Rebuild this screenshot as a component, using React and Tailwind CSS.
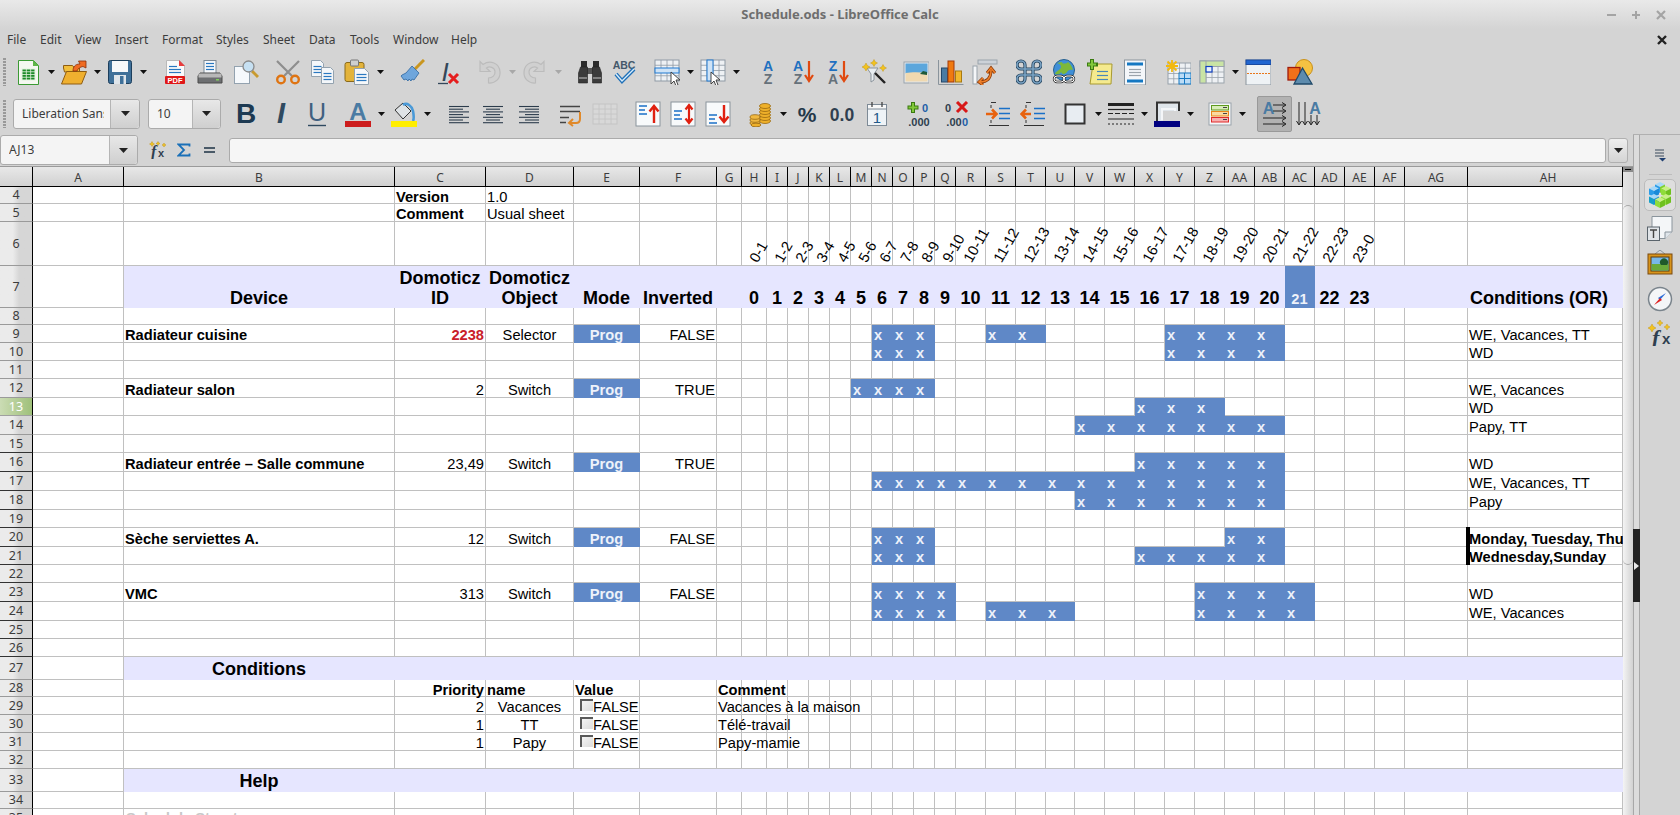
import React from "react";

const UI = "[font-family:'Noto_Sans',sans-serif]";

const COLS = ["A","B","C","D","E","F","G","H","I","J","K","L","M","N","O","P","Q","R","S","T","U","V","W","X","Y","Z","AA","AB","AC","AD","AE","AF","AG","AH"];
const ROWS = Array.from({ length: 32 }, (_, i) => i + 4);
const HOUR_START = COLS.indexOf("H");

// hours with a blue "x" cell, per sheet row
const SCHEDULE = {
  9: [6, 7, 8, 11, 12, 17, 18, 19, 20],
  10: [6, 7, 8, 17, 18, 19, 20],
  12: [5, 6, 7, 8],
  13: [16, 17, 18],
  14: [14, 15, 16, 17, 18, 19, 20],
  16: [16, 17, 18, 19, 20],
  17: [6, 7, 8, 9, 10, 11, 12, 13, 14, 15, 16, 17, 18, 19, 20],
  18: [14, 15, 16, 17, 18, 19, 20],
  20: [6, 7, 8, 19, 20],
  21: [6, 7, 8, 16, 17, 18, 19, 20],
  23: [6, 7, 8, 9, 18, 19, 20, 21],
  24: [6, 7, 8, 9, 11, 12, 13, 18, 19, 20, 21],
};

const l = (t) => ({ t });
const b = (t) => ({ t, bold: true });
const c = (t) => ({ t, align: "center" });
const r = (t) => ({ t, align: "right" });
const prog = { t: "Prog", prog: true };
const head = (t) => ({ t, head: true, align: "center" });

const CELLS = {
  4: { C: b("Version"), D: l("1.0") },
  5: { C: b("Comment"), D: l("Usual sheet") },
  7: { B: head("Device"), C: head("Domoticz ID"), D: head("Domoticz Object"), E: head("Mode"), F: head("Inverted"), AH: { t: "Conditions (OR)", head: true } },
  9: { B: b("Radiateur cuisine"), C: { t: "2238", bold: true, red: true, align: "right" }, D: c("Selector"), E: prog, F: r("FALSE"), AH: l("WE, Vacances, TT") },
  10: { AH: l("WD") },
  12: { B: b("Radiateur salon"), C: r("2"), D: c("Switch"), E: prog, F: r("TRUE"), AH: l("WE, Vacances") },
  13: { AH: l("WD") },
  14: { AH: l("Papy, TT") },
  16: { B: b("Radiateur entrée – Salle commune"), C: r("23,49"), D: c("Switch"), E: prog, F: r("TRUE"), AH: l("WD") },
  17: { AH: l("WE, Vacances, TT") },
  18: { AH: l("Papy") },
  20: { B: b("Sèche serviettes A."), C: r("12"), D: c("Switch"), E: prog, F: r("FALSE"), AH: { t: "Monday, Tuesday, Thursday", bold: true, bar: true } },
  21: { AH: { t: "Wednesday,Sunday", bold: true, bar: true } },
  23: { B: b("VMC"), C: r("313"), D: c("Switch"), E: prog, F: r("FALSE"), AH: l("WD") },
  24: { AH: l("WE, Vacances") },
  27: { B: { t: "Conditions", title: true } },
  28: { C: { t: "Priority", bold: true, align: "right" }, D: b("name"), E: b("Value"), G: b("Comment") },
  29: { C: r("2"), D: c("Vacances"), E: { t: "FALSE", check: true }, G: l("Vacances à la maison") },
  30: { C: r("1"), D: c("TT"), E: { t: "FALSE", check: true }, G: l("Télé-travail") },
  31: { C: r("1"), D: c("Papy"), E: { t: "FALSE", check: true }, G: l("Papy-mamie") },
  33: { B: { t: "Help", title: true } },
  35: { B: { t: "Schedule Structure", faint: true } },
};

function Icon({ className = "", children }) {
  return (
    <svg viewBox="0 0 26 26" className={`h-[26px] w-[26px] shrink-0 ${className}`}>
      {children}
    </svg>
  );
}

function Arrow({ className = "", muted }) {
  return (
    <svg viewBox="0 0 7 4" className={`h-[4px] w-[7px] shrink-0 ${className}`}>
      <path d="M0 0h7L3.5 4z" fill={muted ? "#a8a8a8" : "#111"} />
    </svg>
  );
}

function Grip() {
  return <div className="ml-[3px] h-[28px] w-[3px] shrink-0 bg-[repeating-linear-gradient(to_bottom,#999_0,#999_2px,transparent_2px,transparent_3px)]" />;
}

function TableLines({ x, y, w, h, cols, rows, color = "#8f9aa5", fill = "#eef1f4" }) {
  const cw = w / cols;
  const rh = h / rows;
  return (
    <g>
      <rect x={x} y={y} width={w} height={h} fill={fill} stroke={color} />
      {Array.from({ length: cols - 1 }, (_, i) => (
        <path key={i} d={`M${x + cw * (i + 1)} ${y}v${h}`} stroke={color} strokeWidth=".8" />
      ))}
      {Array.from({ length: rows - 1 }, (_, i) => (
        <path key={i} d={`M${x} ${y + rh * (i + 1)}h${w}`} stroke={color} strokeWidth=".8" />
      ))}
    </g>
  );
}

const Cursor = ({ x, y }) => (
  <path transform={`translate(${x} ${y})`} d="M0 0v12l3-3 2 5 2-1-2-5h4z" fill="#fff" stroke="#333" strokeWidth=".9" />
);

const DocLines = ({ x, y, w, n = 3, gap = 3, color = "#2a78c0" }) => (
  <g stroke={color} strokeWidth="1.2">
    {Array.from({ length: n }, (_, i) => (
      <path key={i} d={`M${x} ${y + i * gap + 0.5}h${w}`} />
    ))}
  </g>
);

const SvgText = ({ x, y, size, fill, children, weight = "bold", style = "normal", anchor = "middle" }) => (
  <text x={x} y={y} fontSize={size} fill={fill} fontWeight={weight} fontStyle={style} textAnchor={anchor} fontFamily="'Liberation Sans',sans-serif">
    {children}
  </text>
);

const NewDoc = (p) => (
  <Icon {...p}>
    <path d="M3.5 1.5h15l5 5v19h-20z" fill="#f5f8f1" stroke="#3b9a34" />
    <path d="M18 1l6 6h-6z" fill="#5fb548" />
    <TableLines x={7} y={10} w={13} h={11} cols={3} rows={4} color="#e4f3df" fill="#1c8a28" />
  </Icon>
);
const OpenDoc = (p) => (
  <Icon {...p}>
    <path d="M2.5 9V6.500h9l2 2.500h5v4h-15z" fill="#f2bf3c" stroke="#8f5d12" />
    <path d="M5.500 12.500h20l-5 12.500H.5z" fill="#efb02f" stroke="#8f5d12" />
    <path d="M12 12c0-4 2-7 7-7l-1.500-3H25v7l-3-1.500c-3 .5-5 2-6 4.500z" fill="#ef6b22" stroke="#8a2f0a" strokeWidth=".8" />
  </Icon>
);
const Save = (p) => (
  <Icon {...p}>
    <rect x="1.500" y="1.500" width="23" height="23" rx="2" fill="#3f7099" stroke="#1d3f5c" />
    <rect x="5" y="2" width="16" height="11" fill="#f6f8fa" />
    <rect x="7" y="16" width="12" height="9" fill="#dfe5ea" />
    <rect x="13" y="17" width="3.500" height="8" fill="#3f7099" />
  </Icon>
);
const Pdf = (p) => (
  <Icon {...p}>
    <path d="M4.500 1.500h13l5 5v14h-18z" fill="#fafafa" stroke="#b9b9b9" />
    <path d="M17 1l6 6h-6z" fill="#e83d3d" />
    <DocLines x={7} y={7} w={8} n={1} />
    <DocLines x={7} y={10} w={12} n={2} />
    <rect x="3" y="17" width="20" height="8" rx="1" fill="#e01818" />
    <SvgText x={13} y={23.500} size={7.500} fill="#fff">PDF</SvgText>
  </Icon>
);
const Printer = (p) => (
  <Icon {...p}>
    <rect x="7" y="1.500" width="12" height="14" fill="#f5f8fb" stroke="#7d8a96" />
    <DocLines x={9} y={4} w={8} n={3} />
    <path d="M3 14h20l2 3v7H1v-7z" fill="#6d6f71" stroke="#4a4a4a" />
    <rect x="1.500" y="14.500" width="23" height="4" fill="#b8b8b8" />
    <rect x="19" y="20" width="3" height="1.500" fill="#7fd05a" />
  </Icon>
);
const Preview = (p) => (
  <Icon {...p}>
    <rect x="1.500" y="7.500" width="15" height="17" fill="#f6f9fc" stroke="#93a2af" />
    <path d="M19 12l6 6" stroke="#c89a30" strokeWidth="3" />
    <circle cx="15.500" cy="7.500" r="5.500" fill="#c6e0f2" stroke="#8a8a8a" strokeWidth="1.300" />
  </Icon>
);
const Cut = (p) => (
  <Icon {...p}>
    <path d="M2 2l15 15M24 2L9 17" stroke="#8e8e8e" strokeWidth="2.200" />
    <circle cx="6" cy="20.500" r="3.800" fill="none" stroke="#df7412" strokeWidth="2.400" />
    <circle cx="20" cy="20.500" r="3.800" fill="none" stroke="#df7412" strokeWidth="2.400" />
  </Icon>
);
const Copy = (p) => (
  <Icon {...p}>
    <path d="M1.500 1.500h9l3 3v13h-12z" fill="#f4f7fa" stroke="#93a2af" />
    <DocLines x={3.500} y={7} w={8} n={3} />
    <path d="M11.500 8.500h9l3 3v13h-12z" fill="#f4f7fa" stroke="#93a2af" />
    <DocLines x={13.500} y={14} w={8} n={3} />
  </Icon>
);
const Paste = (p) => (
  <Icon {...p}>
    <rect x="1" y="3.500" width="19" height="19" rx="2" fill="#e3b33a" stroke="#8a6a1a" />
    <rect x="6.500" y="1" width="8" height="6" rx="1" fill="#cfcfcf" stroke="#777" />
    <path d="M10.500 9.500h10l4 4v12h-14z" fill="#f6f8fa" stroke="#93a2af" />
    <DocLines x={12.500} y={15} w={10} n={3} />
  </Icon>
);
const Clone = (p) => (
  <Icon {...p}>
    <path d="M25 1l-9 9" stroke="#c9961f" strokeWidth="3" />
    <path d="M13 7l7 7-5 7-2-1-1 2-2-2-1 2-2-2-2 1-3-4 1-1 4-2z" fill="#6fa6dc" stroke="#2d66a0" strokeWidth=".8" />
  </Icon>
);
const ClearFormat = (p) => (
  <Icon {...p}>
    <SvgText x={9} y={22} size={26} fill="#33475a" weight="normal" style="italic">I</SvgText>
    <path d="M2 24.500h10" stroke="#33475a" strokeWidth="1.300" />
    <path d="M13 15l9 9M22 15l-9 9" stroke="#e51e1e" strokeWidth="3" />
  </Icon>
);
const UndoShape = "M4 2.500v10h10l-3.500-3.500c3-2 8-1 8.500 3.500.4 3.500-2.500 6.500-6.500 6.500v5c7 .5 12-4.500 11.500-11C23.500 4 14 .5 7 5.500z";
const Undo = (p) => (
  <Icon {...p}>
    <path d={UndoShape} fill="#d0d0d0" stroke="#bcbcbc" strokeWidth="1.200" />
  </Icon>
);
const Redo = (p) => (
  <Icon {...p}>
    <g transform="matrix(-1 0 0 1 26 0)">
      <path d={UndoShape} fill="#d0d0d0" stroke="#bcbcbc" strokeWidth="1.200" />
    </g>
  </Icon>
);
const Binoculars = (p) => (
  <Icon {...p}>
    <rect x="4" y="2" width="6" height="7" fill="#2c2c2c" />
    <rect x="16" y="2" width="6" height="7" fill="#2c2c2c" />
    <rect x="10" y="9" width="6" height="6" fill="#555" />
    <path d="M3.500 8h7v16h-9v-10z" fill="#3b3b3b" stroke="#222" strokeWidth=".6" />
    <path d="M15.500 8h7l2 6v10h-9z" fill="#3b3b3b" stroke="#222" strokeWidth=".6" />
    <path d="M2 19h8M16 19h8" stroke="#999" strokeWidth="1.500" />
  </Icon>
);
const Spell = (p) => (
  <Icon {...p}>
    <SvgText x={12} y={9.500} size={10.500} fill="#44586a">ABC</SvgText>
    <path d="M4 15l6 7L22 10" fill="none" stroke="#1f70b8" strokeWidth="4" />
    <path d="M4 15l6 7L22 10" fill="none" stroke="#d8ecfa" strokeWidth="1.400" />
  </Icon>
);
const RowSelect = (p) => (
  <Icon {...p}>
    <TableLines x={1} y={1} w={24} h={21} cols={4} rows={4} />
    <rect x="1" y="9" width="24" height="5" fill="#cfe3f6" stroke="#1f78d0" />
    <Cursor x={17} y={13} />
  </Icon>
);
const ColSelect = (p) => (
  <Icon {...p}>
    <TableLines x={1} y={1} w={24} h={21} cols={4} rows={4} />
    <rect x="7" y="1" width="6" height="21" fill="#cfe3f6" stroke="#1f78d0" />
    <Cursor x={11} y={13} />
  </Icon>
);
const SortPlain = (p) => (
  <Icon {...p}>
    <SvgText x={13} y={12} size={14} fill="#1f70c0">A</SvgText>
    <SvgText x={13} y={25} size={14} fill="#66717a">Z</SvgText>
  </Icon>
);
const SortAsc = (p) => (
  <Icon {...p}>
    <SvgText x={7} y={12} size={14} fill="#1f70c0">A</SvgText>
    <SvgText x={7} y={25} size={14} fill="#66717a">Z</SvgText>
    <path d="M18 2v18M14 16l4 6 4-6" fill="none" stroke="#e04a10" strokeWidth="2.200" />
  </Icon>
);
const SortDesc = (p) => (
  <Icon {...p}>
    <SvgText x={7} y={12} size={14} fill="#1f70c0">Z</SvgText>
    <SvgText x={7} y={25} size={14} fill="#66717a">A</SvgText>
    <path d="M18 2v18M14 16l4 6 4-6" fill="none" stroke="#e04a10" strokeWidth="2.200" />
  </Icon>
);
const Sparkle = ({ x, y, s = 3, color = "#f2c320" }) => (
  <path d={`M${x} ${y - s}l${s * 0.35} ${s * 0.65} ${s * 0.65} ${s * 0.35}-${s * 0.65} ${s * 0.35}-${s * 0.35} ${s * 0.65}-${s * 0.35}-${s * 0.65}-${s * 0.65}-${s * 0.35} ${s * 0.65}-${s * 0.35}z`} fill={color} stroke="#b88a10" strokeWidth=".4" />
);
const AutoFilter = (p) => (
  <Icon {...p}>
    <path d="M6 9h11l-4 6v6l-3 2v-8z" fill="#e8edf1" stroke="#8a949c" />
    <path d="M14 14l10 10" stroke="#222" strokeWidth="2.400" />
    <Sparkle x={5} y={8} s={4} />
    <Sparkle x={13} y={4} s={3.500} />
    <Sparkle x={22} y={9} s={3.500} />
  </Icon>
);
const Picture = (p) => (
  <Icon {...p}>
    <rect x="1" y="3" width="25" height="21" fill="#e6e9ec" stroke="#9aa3ab" />
    <rect x="2.500" y="4.500" width="22" height="10" fill="#5ba6dc" />
    <path d="M2.500 14c6-1 14-1 22 0v8.500h-22z" fill="#f0d9b0" />
    <path d="M17 15l3-3 4 1v3z" fill="#1f5a3a" />
  </Icon>
);
const Chart = (p) => (
  <Icon {...p}>
    <path d="M.5 1v24.500h25" fill="none" stroke="#8a949c" />
    <rect x="3.500" y="9" width="6" height="14" fill="#4a7ba3" stroke="#24486a" />
    <rect x="10" y="2" width="6" height="21" fill="#f07a10" stroke="#a33a0a" />
    <rect x="17.500" y="12" width="6" height="11" fill="#f2b82e" stroke="#a87a10" />
  </Icon>
);
const Pivot = (p) => (
  <Icon {...p}>
    <rect x="6" y="1" width="19" height="4" fill="#ccd2d8" stroke="#9aa3ab" />
    <rect x="1" y="7" width="4" height="18" fill="#f4f6f8" stroke="#9aa3ab" />
    <path d="M8 23c8 0 11-5 11-12M15 14l4-5 4 5M11 19l-4 4 4 3" fill="none" stroke="#8a3a0a" strokeWidth="3" />
    <path d="M8 23c8 0 11-5 11-12M15 14l4-5 4 5M11 19l-4 4 4 3" fill="none" stroke="#f0812a" strokeWidth="1.500" />
  </Icon>
);
const Navigator = (p) => (
  <Icon {...p}>
    <path d="M9 9V6a4 4 0 1 0-4 4h16a4 4 0 1 0-4-4v14a4 4 0 1 0 4-4H5a4 4 0 1 0 4 4z" fill="none" stroke="#25455f" strokeWidth="3.200" />
    <path d="M9 9V6a4 4 0 1 0-4 4h16a4 4 0 1 0-4-4v14a4 4 0 1 0 4-4H5a4 4 0 1 0 4 4z" fill="none" stroke="#7aa3c4" strokeWidth="1.600" />
  </Icon>
);
const Hyperlink = (p) => (
  <Icon {...p}>
    <circle cx="13" cy="11" r="10.500" fill="#3f8fd8" stroke="#27608f" />
    <path d="M6 4c4 1 5 4 3 6s-4 2-5 5c3 1 5 0 6-2 1 3 5 2 6 0 2-3 5-2 6-2-1-3-2-6-5-8-2 2-6 2-6 0z" fill="#7db83a" />
    <rect x="3" y="17" width="10" height="6" rx="3" fill="none" stroke="#333" strokeWidth="2.400" />
    <rect x="13" y="17" width="10" height="6" rx="3" fill="none" stroke="#333" strokeWidth="2.400" />
    <rect x="3" y="17" width="10" height="6" rx="3" fill="none" stroke="#fff" strokeWidth="1" />
    <rect x="13" y="17" width="10" height="6" rx="3" fill="none" stroke="#fff" strokeWidth="1" />
  </Icon>
);
const Note = (p) => (
  <Icon {...p}>
    <path d="M6 5h19l-1 20H3z" fill="#f5ea8e" stroke="#a89a30" />
    <DocLines x={10} y={12} w={11} n={3} gap={4} color="#4a88b8" />
    <path d="M5 0v11M0 5.500h11" stroke="#3a7a10" strokeWidth="4" />
    <path d="M5 1v9M1 5.500h8" stroke="#82c83a" strokeWidth="2" />
  </Icon>
);
const Headers = (p) => (
  <Icon {...p}>
    <rect x="2.500" y="1" width="21" height="25" fill="#f4f7fa" stroke="#8a949c" />
    <rect x="5" y="3.500" width="16" height="3" fill="#1578c2" />
    <rect x="5" y="20.500" width="16" height="3" fill="#1578c2" />
    <DocLines x={7} y={10} w={12} n={3} gap={3} color="#9aa3ab" />
  </Icon>
);
const PrintRange = (p) => (
  <Icon {...p}>
    <TableLines x={3} y={4} w={23} h={21} cols={4} rows={4} color="#96a0a9" />
    <rect x="14" y="14" width="12" height="11" fill="#bcdcf6" stroke="#1578c2" />
    <path d="M19.500 14v11M14 19.500h12" stroke="#1578c2" />
    <path d="M7 1v12M1 7h12M2.500 2.500l9 9M11.500 2.500l-9 9" stroke="#f3b90d" strokeWidth="1.800" />
  </Icon>
);
const Freeze = (p) => (
  <Icon {...p}>
    <TableLines x={1} y={2} w={24} h={22} cols={4} rows={4} color="#9aa3ab" />
    <rect x="1" y="2" width="24" height="5.500" fill="#c9e4a4" stroke="#9aa3ab" />
    <rect x="1" y="2" width="6" height="22" fill="#c9e4a4" stroke="#9aa3ab" />
    <rect x="7" y="7.500" width="6" height="5.500" fill="#eaf2fb" stroke="#1040c0" strokeWidth="1.200" />
  </Icon>
);
const Split = (p) => (
  <Icon {...p}>
    <rect x="1" y="1" width="25" height="25" fill="#eef2f5" stroke="#8a949c" />
    <rect x="1" y="1" width="25" height="4.500" fill="#2166d0" stroke="#1a4aa0" />
    <path d="M2 14.500h23" stroke="#e8761a" strokeWidth="1.200" strokeDasharray="2 1" />
  </Icon>
);
const Shapes = (p) => (
  <Icon {...p}>
    <circle cx="17" cy="9" r="8.500" fill="#f5c242" stroke="#c8901a" />
    <rect x="1" y="8.500" width="12" height="12.500" fill="#f0701a" stroke="#a01a0a" strokeWidth="1.300" />
    <path d="M15.500 9L25 25H7z" fill="#5d8bad" stroke="#1f4a6a" strokeWidth="1.300" />
  </Icon>
);

const FontColor = (p) => (
  <Icon {...p}>
    <SvgText x={13} y={18.500} size={24} fill="#4a7ba3">A</SvgText>
    <rect x="0" y="20" width="26" height="6" fill="#cc1c1c" />
  </Icon>
);
const Background = (p) => (
  <Icon {...p}>
    <path d="M4 9l8-7 8 8-8 8z" fill="#dfe3e6" stroke="#333" />
    <path d="M12 4c4-3 9 1 10 6s1 8 0 10" fill="none" stroke="#4a9ad8" strokeWidth="2.600" />
    <rect x="0" y="20" width="26" height="6" fill="#ffee00" />
  </Icon>
);
const Bars = ({ align, ...p }) => {
  const rows = [20, 14, 20, 14, 20, 14, 20];
  return (
    <Icon {...p}>
      {rows.map((w, i) => {
        const x = align === "left" ? 3 : align === "center" ? 13 - w / 2 : 23 - w;
        return <path key={i} d={`M${x} ${5.500 + i * 2.700}h${w}`} stroke="#2c3c4c" strokeWidth="1.100" />;
      })}
    </Icon>
  );
};
const Wrap = (p) => (
  <Icon {...p}>
    <path d="M2 5.500h20M2 10.500h20" stroke="#444" strokeWidth="1.600" />
    <path d="M2 16.500h9M2 21.500h6" stroke="#444" strokeWidth="1.600" />
    <path d="M22 11v7c0 3-2 4-4 4h-6M15 18l-4 4 4 3" fill="none" stroke="#e0892a" strokeWidth="2" />
  </Icon>
);
const Merge = (p) => (
  <Icon {...p}>
    <TableLines x={1} y={3} w={24} h={20} cols={4} rows={4} color="#c4c4c4" fill="#d8d8d8" />
  </Icon>
);
const AlignBox = ({ children, ...p }) => (
  <Icon {...p}>
    <rect x="1" y="1" width="24" height="24" fill="#f8fafb" stroke="#8a949c" />
    {children}
  </Icon>
);
const AlignTop = (p) => (
  <AlignBox {...p}>
    <path d="M4 5h8M4 9h6M4 13h8" stroke="#1a70c8" strokeWidth="1.300" />
    <path d="M19 22V6M14.500 10.500L19 5l4.500 5.500" fill="none" stroke="#e02010" strokeWidth="2.400" />
  </AlignBox>
);
const AlignMid = (p) => (
  <AlignBox {...p}>
    <path d="M4 10h8M4 14h6M4 18h8" stroke="#1a70c8" strokeWidth="1.300" />
    <path d="M19 5v16M15.500 8.500L19 4l3.500 4.500M15.500 17.500L19 22l3.500-4.500" fill="none" stroke="#e02010" strokeWidth="2.200" />
  </AlignBox>
);
const AlignBottom = (p) => (
  <AlignBox {...p}>
    <path d="M4 14h8M4 18h6M4 22h8" stroke="#1a70c8" strokeWidth="1.300" />
    <path d="M19 4v16M14.500 15.500L19 21l4.500-5.500" fill="none" stroke="#e02010" strokeWidth="2.400" />
  </AlignBox>
);
const Currency = (p) => (
  <Icon {...p}>
    {[20, 17, 14, 11, 8, 5].map((y) => (
      <ellipse key={y} cx="18" cy={y} rx="5.500" ry="2.500" fill="#eeb02a" stroke="#9a6a10" strokeWidth=".8" />
    ))}
    {[22, 19, 16].map((y) => (
      <ellipse key={y} cx="8" cy={y} rx="5" ry="2.300" fill="#f0b840" stroke="#9a6a10" strokeWidth=".8" />
    ))}
    <ellipse cx="9" cy="24" rx="5" ry="1.800" fill="#eeb02a" stroke="#9a6a10" strokeWidth=".8" />
  </Icon>
);
const Percent = (p) => (
  <Icon {...p}>
    <SvgText x={13} y={21} size={21} fill="#24384a">%</SvgText>
  </Icon>
);
const NumFormat = (p) => (
  <Icon {...p}>
    <SvgText x={13} y={20} size={17.500} fill="#2f3f4f">0.0</SvgText>
  </Icon>
);
const DateIcon = (p) => (
  <Icon {...p}>
    <rect x="3.500" y="3.500" width="19" height="21" fill="#eef3f7" stroke="#7d8a96" />
    <rect x="3.500" y="3.500" width="19" height="4.500" fill="#f8f8f8" stroke="#7d8a96" />
    <path d="M8 1v5M18 1v5" stroke="#444" strokeWidth="1.300" />
    <SvgText x={13} y={22} size={15} fill="#1f5a8a" weight="normal">1</SvgText>
  </Icon>
);
const AddDecimal = (p) => (
  <Icon {...p}>
    <path d="M7 1v11M1.500 6.500h11" stroke="#3a7a10" strokeWidth="4" />
    <path d="M7 2v9M2.500 6.500h9" stroke="#82c83a" strokeWidth="2" />
    <SvgText x={19} y={11} size={11} fill="#1f5fa8">0</SvgText>
    <SvgText x={13} y={25} size={11} fill="#2f3f4f">.000</SvgText>
  </Icon>
);
const DelDecimal = (p) => (
  <Icon {...p}>
    <path d="M14 1l10 10M24 1L14 11" stroke="#d81818" strokeWidth="3" />
    <SvgText x={5} y={11} size={11} fill="#2f3f4f">0</SvgText>
    <SvgText x={11} y={25} size={11} fill="#2f3f4f">.00</SvgText>
    <SvgText x={22} y={25} size={11} fill="#1f5fa8">0</SvgText>
  </Icon>
);
const Indent = ({ back, ...p }) => (
  <Icon {...p}>
    <path d="M6 1.500h5M4 24.500h20M6 4v3M6 19v3" stroke="#333" strokeWidth="1" />
    <path d="M14 7.500h11M14 12.500h11M14 17.500h11" stroke="#1a70c8" strokeWidth="1.600" />
    {back ? (
      <path d="M11 13H2M6 8.500L1.500 13 6 17.500" fill="none" stroke="#e8620e" strokeWidth="2.600" />
    ) : (
      <path d="M1 13h10M7 8.500l4.500 4.500L7 17.500" fill="none" stroke="#e8620e" strokeWidth="2.600" />
    )}
  </Icon>
);
const Border = (p) => (
  <Icon {...p}>
    <rect x="3.500" y="3.500" width="19" height="19" fill="#e8edf2" stroke="#333" strokeWidth="2" />
  </Icon>
);
const LineStyle = (p) => (
  <Icon {...p}>
    <path d="M0 3.500h26" stroke="#222" strokeWidth="3" />
    <path d="M0 8.500h26" stroke="#222" strokeWidth="1.200" />
    <path d="M0 12.500h26" stroke="#222" strokeWidth="1.200" strokeDasharray="5 2" />
    <path d="M0 18h26" stroke="#222" strokeWidth="1" />
    <path d="M0 23h26" stroke="#222" strokeWidth="1.200" strokeDasharray="2 2" />
  </Icon>
);
const BorderColor = (p) => (
  <Icon {...p}>
    <path d="M3 20V1.500h22v9" fill="none" stroke="#333" strokeWidth="2" />
    <rect x="4" y="3" width="20" height="17" fill="#dfe5ea" />
    <path d="M8 19V8h13v3" fill="none" stroke="#f4f6f8" strokeWidth="2" />
    <rect x="9" y="10" width="17" height="10" fill="#d4d4d4" />
    <rect x="0" y="20" width="26" height="6" fill="#000080" />
  </Icon>
);
const Conditional = (p) => (
  <Icon {...p}>
    <rect x="2" y="2" width="22" height="22" fill="#f6f8fa" stroke="#9aa3ab" />
    <rect x="4.500" y="4.500" width="17" height="4.500" fill="#d8edb8" stroke="#5f9a1f" />
    <rect x="4.500" y="10.500" width="17" height="4.500" fill="#fbd9a0" stroke="#e8861a" />
    <rect x="4.500" y="16.500" width="17" height="4.500" fill="#f6b0b0" stroke="#e02a2a" />
    <path d="M16 6.500h4M16 12.500h4M16 18.500h4" stroke="#444" />
  </Icon>
);
const TextHorizontal = (p) => (
  <Icon {...p}>
    <SvgText x={6.500} y={13} size={16} fill="#4a7ba3">A</SvgText>
    <path d="M11 4h12M11 10h12M1 17h22M1 23h22M20 1.500L24 4l-4 2.500M20 7.500l4 2.500-4 2.500M20 14.500l4 2.500-4 2.500M20 20.500l4 2.500-4 2.500" fill="none" stroke="#222" strokeWidth="1" />
  </Icon>
);
const TextVertical = (p) => (
  <Icon {...p}>
    <SvgText x={19} y={13} size={16} fill="#4a7ba3">A</SvgText>
    <path d="M3 1v22M9 1v22M15 14v9M21 14v9M.5 20L3 24l2.500-4M6.500 20L9 24l2.500-4M12.500 20L15 24l2.500-4M18.500 20L21 24l2.500-4" fill="none" stroke="#222" strokeWidth="1" />
  </Icon>
);

const FxIcon = ({ className = "" }) => (
  <svg viewBox="0 0 18 18" className={`h-[18px] w-[18px] shrink-0 ${className}`}>
    <text x="2" y="16" fontSize="16" fontStyle="italic" fontWeight="bold" fontFamily="'Liberation Serif',serif" fill="#2f3f4f">f</text>
    <text x="9" y="16" fontSize="11" fontWeight="bold" fontFamily="'Liberation Sans',sans-serif" fill="#2f3f4f">x</text>
    <Sparkle x={3} y={3} s={2.500} />
    <Sparkle x={9} y={2.500} s={2} />
    <Sparkle x={15} y={4} s={2} />
  </svg>
);
const SumIcon = ({ className = "" }) => (
  <svg viewBox="0 0 14 14" className={`h-[14px] w-[14px] shrink-0 ${className}`}>
    <path d="M12.500 3.500V1.500H1.500L7 7l-5.500 5.500h11v-2" fill="none" stroke="#1a70b8" strokeWidth="1.800" />
  </svg>
);

function Combo({ className, width, divider, text, textClass }) {
  return (
    <div className={`flex h-[30px] shrink-0 rounded-[3px] border border-[#ababab] bg-[#f4f4f4] ${width} ${className}`}>
      <div className={`flex items-center ${divider}`}>
        <span className={`block overflow-hidden whitespace-nowrap text-[12px] text-[#3c3c3c] ${UI} ${textClass}`}>{text}</span>
      </div>
      <div className="flex flex-1 items-center justify-center rounded-r-[3px] border-l border-[#b5b5b5] bg-gradient-to-b from-[#e8e8e8] to-[#cfcfcf]">
        <svg viewBox="0 0 9 5" className="h-[5px] w-[9px]">
          <path d="M0 0h9L4.500 5z" fill="#222" />
        </svg>
      </div>
    </div>
  );
}

function ToolbarOne() {
  return (
    <div className="flex h-[42px] items-center">
      <Grip />
      <NewDoc className="ml-[9px]" />
      <Arrow className="ml-[7px]" />
      <OpenDoc className="ml-[6px]" />
      <Arrow className="ml-[7px]" />
      <Save className="ml-[6px]" />
      <Arrow className="ml-[7px]" />
      <Pdf className="ml-[15px]" />
      <Printer className="ml-[9px]" />
      <Preview className="ml-[10px]" />
      <Cut className="ml-[16px]" />
      <Copy className="ml-[9px]" />
      <Paste className="ml-[8px]" />
      <Arrow className="ml-[7px]" />
      <Clone className="ml-[15px]" />
      <ClearFormat className="ml-[11px]" />
      <Undo className="ml-[14px]" />
      <Arrow className="ml-[7px]" muted />
      <Redo className="ml-[6px]" />
      <Arrow className="ml-[7px]" muted />
      <Binoculars className="ml-[15px]" />
      <Spell className="ml-[9px]" />
      <RowSelect className="ml-[16px]" />
      <Arrow className="ml-[7px]" />
      <ColSelect className="ml-[6px]" />
      <Arrow className="ml-[7px]" />
      <SortPlain className="ml-[15px]" />
      <SortAsc className="ml-[10px]" />
      <SortDesc className="ml-[9px]" />
      <AutoFilter className="ml-[9px]" />
      <Picture className="ml-[16px]" />
      <Chart className="ml-[9px]" />
      <Pivot className="ml-[8px]" />
      <Navigator className="ml-[18px]" />
      <Hyperlink className="ml-[9px]" />
      <Note className="ml-[10px]" />
      <Headers className="ml-[9px]" />
      <PrintRange className="ml-[17px]" />
      <Freeze className="ml-[8px]" />
      <Arrow className="ml-[7px]" />
      <Split className="ml-[6px]" />
      <Shapes className="ml-[16px]" />
    </div>
  );
}

function ToolbarTwo() {
  return (
    <div className="flex h-[41px] items-center">
      <Grip />
      <Combo className="ml-[7px]" width="w-[127px]" divider="w-[96px]" textClass="ml-[8px] w-[82px]" text="Liberation Sans" />
      <Combo className="ml-[8px]" width="w-[73px]" divider="w-[43px]" textClass="ml-[8px]" text="10" />
      <Icon className="ml-[12px]">
        <SvgText x={13} y={22} size={28} fill="#1d3a52">B</SvgText>
      </Icon>
      <Icon className="ml-[9px]">
        <SvgText x={13} y={22} size={29} fill="#2f4a60" style="italic" weight="bold">I</SvgText>
      </Icon>
      <Icon className="ml-[10px]">
        <SvgText x={13} y={20} size={25} fill="#3f6080" weight="normal">U</SvgText>
        <path d="M4 24.500h18" stroke="#2f4a60" strokeWidth="1.400" />
      </Icon>
      <FontColor className="ml-[15px]" />
      <Arrow className="ml-[7px]" />
      <Background className="ml-[6px]" />
      <Arrow className="ml-[7px]" />
      <Bars align="left" className="ml-[15px]" />
      <Bars align="center" className="ml-[8px]" />
      <Bars align="right" className="ml-[10px]" />
      <Wrap className="ml-[16px]" />
      <Merge className="ml-[8px]" />
      <AlignTop className="ml-[17px]" />
      <AlignMid className="ml-[9px]" />
      <AlignBottom className="ml-[9px]" />
      <Currency className="ml-[16px]" />
      <Arrow className="ml-[7px]" />
      <Percent className="ml-[7px]" />
      <NumFormat className="ml-[9px]" />
      <DateIcon className="ml-[9px]" />
      <AddDecimal className="ml-[16px]" />
      <DelDecimal className="ml-[11px]" />
      <Indent className="ml-[16px]" />
      <Indent back className="ml-[9px]" />
      <Border className="ml-[16px]" />
      <Arrow className="ml-[7px]" />
      <LineStyle className="ml-[6px]" />
      <Arrow className="ml-[7px]" />
      <BorderColor className="ml-[6px]" />
      <Arrow className="ml-[7px]" />
      <Conditional className="ml-[13px]" />
      <Arrow className="ml-[6px]" />
      <div className="ml-[11px] flex h-[36px] w-[35px] shrink-0 items-center justify-center rounded-[2px] border border-[#999] bg-[#b2b2b2]">
        <TextHorizontal />
      </div>
      <TextVertical className="ml-[4px]" />
    </div>
  );
}

function FormulaBar() {
  return (
    <div className="flex h-[33px] items-center border-b border-[#9a9a9a]">
      <Combo className="" width="w-[138px]" divider="w-[108px]" textClass="ml-[8px]" text="AJ13" />
      <FxIcon className="ml-[11px]" />
      <SumIcon className="ml-[10px]" />
      <span className="ml-[13px] h-[6px] w-[11px] shrink-0 border-y-2 border-[#4a5a68]" />
      <div className="ml-[14px] h-[25px] flex-1 rounded-[3px] border border-[#ababab] bg-[#f6f6f6]" />
      <div className="mr-[5px] ml-[2px] flex h-[25px] w-[20px] shrink-0 items-center justify-center rounded-[3px] border border-[#b0b0b0] bg-gradient-to-b from-[#eeeeee] to-[#d4d4d4]">
        <svg viewBox="0 0 9 5" className="h-[5px] w-[9px]">
          <path d="M0 0h9L4.500 5z" fill="#222" />
        </svg>
      </div>
    </div>
  );
}

function SheetCell({ row, col, index }) {
  const cell = CELLS[row]?.[col];
  const hour = index - HOUR_START;
  const isHour = hour >= 0 && hour < 24;
  const banded = (row === 7 || row === 27 || row === 33) && index >= 1;
  const scheduled = isHour && SCHEDULE[row]?.includes(hour);
  const now = row === 7 && hour === 21;

  let tone = "border-[#c0c0c0]";
  if (banded) tone = "border-[#e6e6ff] bg-[#e6e6ff]";
  if (scheduled || now || cell?.prog) tone = "border-[#5f88c7] bg-[#5f88c7]";

  if (row === 6 && isHour) {
    return (
      <div className={`relative border-r border-b ${tone}`}>
        <span className="absolute bottom-[0px] left-[18px] origin-bottom-left rotate-[-60deg] whitespace-nowrap text-[14.67px] leading-[15px] text-black">
          {hour}-{(hour + 1) % 24}
        </span>
      </div>
    );
  }

  if (row === 7 && isHour) {
    return (
      <div className={`flex items-end justify-center border-r border-b ${tone}`}>
        {now ? (
          <span className="translate-y-[1px] text-[14.67px] font-bold leading-[18px] text-[#eef2fa]">21</span>
        ) : (
          <span className="translate-y-[1px] text-[18px] font-bold leading-[20px] text-black">{hour}</span>
        )}
      </div>
    );
  }

  if (scheduled) {
    return <div className={`flex items-center border-r border-b pt-[3px] pl-[2px] text-[14.67px] font-bold text-[#eef2fa] ${tone}`}>x</div>;
  }

  if (!cell) return <div className={`border-r border-b ${tone}`} />;

  if (cell.prog) {
    return <div className={`flex items-center justify-center border-r border-b pt-[3px] text-[14.67px] font-bold text-[#eef2fa] ${tone}`}>Prog</div>;
  }
  if (cell.head) {
    return (
      <div className={`flex items-end border-r border-b px-[2px] text-[18px] font-bold leading-[20px] text-black ${cell.align === "center" ? "justify-center text-center" : ""} ${tone}`}>
        <span className="translate-y-[1px]">{cell.t}</span>
      </div>
    );
  }
  if (cell.title) {
    return <div className={`flex items-center justify-center border-r border-b pt-[3px] text-[18px] font-bold text-black ${tone}`}>{cell.t}</div>;
  }
  if (cell.check) {
    return (
      <div className={`flex items-center border-r border-b pt-[3px] whitespace-nowrap text-[14.67px] text-black ${tone}`}>
        <span className="ml-[6px] h-[12px] w-[13px] shrink-0 -translate-y-[2px] border-t-2 border-l-2 border-[#5a5a5a] bg-gradient-to-br from-[#f4f4f4] to-[#dcdcdc]" />
        <span>{cell.t}</span>
      </div>
    );
  }
  if (cell.faint) {
    return <div className={`border-r border-b pt-[2px] pl-[2px] text-[14.67px] font-bold leading-[14px] whitespace-nowrap text-[#c8c8c8] ${tone}`}>{cell.t}</div>;
  }

  const align = cell.align === "right" ? "justify-end" : cell.align === "center" ? "justify-center" : "justify-start";
  return (
    <div
      className={`relative flex items-center border-r border-b px-[1px] pt-[3px] text-[14.67px] whitespace-nowrap ${align} ${cell.bold ? "font-bold" : ""} ${cell.red ? "text-[#c9202a]" : "text-black"} ${tone}`}
    >
      {cell.bar && <span className="absolute top-[-1px] bottom-[-1px] left-[-2px] w-[4px] bg-black" />}
      {cell.t}
    </div>
  );
}

function Sheet() {
  return (
    <div className="relative min-h-0 flex-1 overflow-hidden bg-white [font-family:'Liberation_Sans',sans-serif]">
      <div className="grid grid-cols-[33px_91px_271px_91px_88px_66px_77px_25px_25px_21px_21px_21px_21px_21px_21px_21px_21px_21px_30px_30px_30px_29px_30px_30px_30px_30px_30px_30px_30px_30px_30px_30px_30px_63px_155px] grid-rows-[20px_17px_18px_44px_42px_17px_18px_18px_18px_19px_18px_19px_18px_19px_19px_19px_18px_19px_18px_18px_19px_19px_18px_18px_23px_17px_18px_18px_18px_18px_23px_17px_18px] overflow-hidden">
        <div className="border-r border-b border-black bg-gradient-to-b from-[#e8e8e8] to-[#d2d2d2]" />
        {COLS.map((col) => (
          <div
            key={col}
            className={`flex items-center justify-center border-r border-b border-black bg-gradient-to-b from-[#e8e8e8] to-[#d0d0d0] pt-[2px] text-[12px] text-[#3c3c3c] ${UI} ${col === "AH" ? "pl-[6px]" : ""}`}
          >
            {col}
          </div>
        ))}
        {ROWS.map((row) => (
          <React.Fragment key={row}>
            <div
              className={`flex items-center justify-center border-r border-b border-r-black pt-[1px] text-[12.5px] ${UI} ${
                row === 13
                  ? "border-b-[#a0a0a0] bg-gradient-to-r from-[#cbdcb4] to-[#9fc07a] text-white"
                  : "bg-gradient-to-r from-[#ebebeb] from-40% to-[#d6d6d6] to-60% text-[#3c3c3c]"
              } ${row >= 15 && row < 27 ? "border-b-[#333]" : "border-b-[#9a9a9a]"}`}
            >
              {row}
            </div>
            {COLS.map((col, i) => (
              <SheetCell key={col} row={row} col={col} index={i} />
            ))}
          </React.Fragment>
        ))}
      </div>
    </div>
  );
}

function ScrollBar() {
  return (
    <div className="flex w-[10px] shrink-0 flex-col bg-gradient-to-r from-[#f4f4f4] to-[#d2d2d2]">
      <div className="flex h-[5px] shrink-0 items-center justify-center bg-[#8a8a8a]">
        <span className="h-[1px] w-[6px] bg-black" />
      </div>
      <div className="h-[33px] shrink-0 bg-gradient-to-r from-[#e4e4e4] to-[#dadada]" />
      <div className="h-[360px] shrink-0 rounded-[6px] border-y border-[#a8a8a8]" />
    </div>
  );
}

function SidebarIcon({ className = "", children }) {
  return (
    <svg viewBox="0 0 26 26" className={`h-[26px] w-[26px] shrink-0 ${className}`}>
      {children}
    </svg>
  );
}

const Cube = ({ x, y, top, side, front }) => (
  <g transform={`translate(${x} ${y})`}>
    <path d="M5 0l5 2.500L5 5 0 2.500z" fill={top} />
    <path d="M0 2.500L5 5v6L0 8.500z" fill={front} />
    <path d="M10 2.500L5 5v6l5-2.500z" fill={side} />
  </g>
);

function Sidebar() {
  return (
    <div className="relative flex w-[47px] shrink-0 border-t border-[#b0b0b0]">
      <div className="w-[7px] shrink-0 border-x border-[#a8a8a8] bg-[#dcdcdc]" />
      <div className="flex flex-1 flex-col items-center">
        <svg viewBox="0 0 12 14" className="mt-[13px] h-[14px] w-[12px]">
          <path d="M1 2h9M1 5h9M1 8h9" stroke="#3a4a5c" strokeWidth="1.200" />
          <path d="M5 10h7l-3.500 3.500z" fill="#1f3f70" />
        </svg>
        <div className="mt-[12px] h-[1px] w-[23px] bg-[#bdbdbd]" />
        <div className="mt-[4px] flex h-[32px] w-[32px] items-center justify-center rounded-[5px] border border-[#bcbcbc] bg-[#dedede]">
          <SidebarIcon>
            <Cube x={8} y={0} top="#a8d8f8" side="#7fd12f" front="#2a9ce8" />
            <Cube x={2} y={4} top="#a8d8f8" side="#1a8ad8" front="#2a9ce8" />
            <Cube x={14} y={4} top="#c8f088" side="#6fc01f" front="#8fdc3a" />
            <Cube x={2} y={12} top="#a8d8f8" side="#1a8ad8" front="#16a0c8" />
            <Cube x={14} y={12} top="#c8f088" side="#6fc01f" front="#8fdc3a" />
            <Cube x={8} y={15} top="#c8f088" side="#6fc01f" front="#8fdc3a" />
          </SidebarIcon>
        </div>
        <SidebarIcon className="mt-[4px]">
          <path d="M5 1.500h20v15l-7 7H5z" fill="#f4f6f8" stroke="#8a949c" />
          <path d="M18 24v-7h7" fill="#dfe5ea" stroke="#8a949c" />
          <rect x="0.500" y="12" width="12" height="13.500" fill="#e0e4e8" stroke="#5a646c" />
          <path d="M3 15h7M6.500 15v8" stroke="#444" strokeWidth="1.400" />
        </SidebarIcon>
        <SidebarIcon className="mt-[9px]">
          <path d="M8 4l5-4 5 4" fill="none" stroke="#8a949c" />
          <rect x="1" y="4" width="24" height="20" fill="#d8941a" stroke="#7a4a10" />
          <rect x="4" y="7" width="18" height="14" fill="#78b8e8" stroke="#5a3a10" />
          <rect x="4.500" y="14" width="17" height="6.500" fill="#6aaa3a" />
          <path d="M14 15a4 4 0 1 1 6 0z" fill="#1f5a2a" />
        </SidebarIcon>
        <SidebarIcon className="mt-[10px]">
          <circle cx="13" cy="13" r="11.500" fill="#f4f6f8" stroke="#7a848c" strokeWidth="1.500" />
          <path d="M19 7l-8 5 2 2z" fill="#2a6ad8" />
          <path d="M7 19l8-5-2-2z" fill="#e02020" />
        </SidebarIcon>
        <svg viewBox="0 0 26 26" className="mt-[8px] h-[26px] w-[26px] shrink-0">
          <text x="5" y="25" fontSize="22" fontStyle="italic" fontWeight="bold" fontFamily="'Liberation Serif',serif" fill="#2f3f4f">f</text>
          <text x="15" y="24" fontSize="15" fontWeight="bold" fontFamily="'Liberation Sans',sans-serif" fill="#2f3f4f">x</text>
          <Sparkle x={5} y={8} s={4} />
          <Sparkle x={13} y={3} s={3} />
          <Sparkle x={20} y={7} s={3} />
        </svg>
      </div>
      <div className="absolute top-[394px] left-0 flex h-[73px] w-[7px] items-center justify-center bg-[#222]">
        <span className="h-0 w-0 border-y-[4px] border-l-[5px] border-y-transparent border-l-[#e8e8e8]" />
      </div>
    </div>
  );
}

export default function App() {
  return (
    <div className="flex h-screen w-screen flex-col overflow-hidden bg-[#d4d4d4]">
      <div className="relative flex h-[29px] shrink-0 items-center justify-center bg-gradient-to-b from-[#e9e9e9] to-[#d4d4d4]">
        <span className={`text-[13px] font-bold text-[#6e6e6e] ${UI}`}>Schedule.ods - LibreOffice Calc</span>
        <div className="absolute top-[10px] right-[14px] flex items-center gap-[15px]">
          <span className="h-[2px] w-[9px] bg-[#a4a4a4]" />
          <svg viewBox="0 0 10 10" className="h-[10px] w-[10px]"><path d="M5 1v8M1 5h8" stroke="#a4a4a4" strokeWidth="2" /></svg>
          <svg viewBox="0 0 10 10" className="h-[10px] w-[10px]"><path d="M1 1l8 8M9 1l-8 8" stroke="#a4a4a4" strokeWidth="2.200" /></svg>
        </div>
      </div>
      <div className={`flex h-[22px] shrink-0 items-center pl-[7px] text-[12px] text-[#3c3c3c] ${UI}`}>
        <span className="w-[33px]">File</span>
        <span className="w-[35px]">Edit</span>
        <span className="w-[40px]">View</span>
        <span className="w-[47px]">Insert</span>
        <span className="w-[54px]">Format</span>
        <span className="w-[47px]">Styles</span>
        <span className="w-[46px]">Sheet</span>
        <span className="w-[41px]">Data</span>
        <span className="w-[43px]">Tools</span>
        <span className="w-[58px]">Window</span>
        <span>Help</span>
        <svg viewBox="0 0 10 10" className="mr-[13px] ml-auto h-[10px] w-[10px]"><path d="M1 1l8 8M9 1l-8 8" stroke="#222" strokeWidth="2.400" /></svg>
      </div>
      <ToolbarOne />
      <ToolbarTwo />
      <div className="flex min-h-0 flex-1">
        <div className="flex min-w-0 flex-1 flex-col">
          <FormulaBar />
          <div className="flex min-h-0 flex-1">
            <Sheet />
            <ScrollBar />
          </div>
        </div>
        <Sidebar />
      </div>
    </div>
  );
}
